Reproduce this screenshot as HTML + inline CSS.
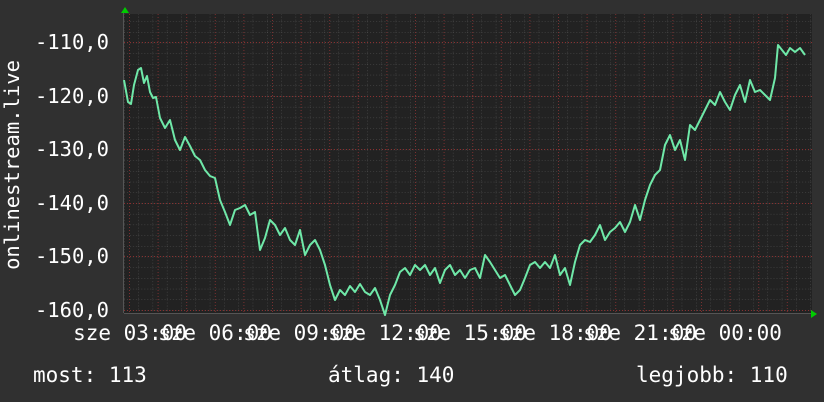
<!DOCTYPE html>
<html><head><meta charset="utf-8"><style>
body{margin:0;width:824px;height:402px;background:#303030;overflow:hidden;font-family:"DejaVu Sans Mono","Liberation Mono",monospace;color:#fff}
svg{position:absolute;left:0;top:0}
</style></head><body>
<svg width="824" height="402" xmlns="http://www.w3.org/2000/svg">
<defs>
<pattern id="minh" width="14.3" height="10.7" patternUnits="userSpaceOnUse" x="124" y="10.6">
<line x1="0" y1="0" x2="14.3" y2="0" stroke="#555" stroke-width="1" stroke-dasharray="1,2"/>
<line x1="0" y1="0" x2="0" y2="10.7" stroke="#555" stroke-width="1" stroke-dasharray="1,2"/>
</pattern>
</defs>
<rect x="124" y="14" width="688" height="299" fill="#222"/>
<rect x="124" y="14" width="688" height="299" fill="url(#minh)"/>
<g stroke="#8a3030" stroke-width="1" stroke-dasharray="1,2">
<line x1="124" y1="42.5" x2="812" y2="42.5"/>
<line x1="124" y1="96.5" x2="812" y2="96.5"/>
<line x1="124" y1="149.5" x2="812" y2="149.5"/>
<line x1="124" y1="203.5" x2="812" y2="203.5"/>
<line x1="124" y1="256.5" x2="812" y2="256.5"/>
<line x1="124" y1="310.5" x2="812" y2="310.5"/>
</g>
<g stroke="#7a3030" stroke-width="1" stroke-dasharray="1,2" id="v"></g>
<line x1="124" y1="313.5" x2="812" y2="313.5" stroke="#555"/>
<line x1="123.5" y1="12" x2="123.5" y2="313" stroke="#555"/>
<polygon points="121,13 125,7 129,13" fill="#0c0"/>
<polygon points="811,310 817,314 811,318" fill="#0c0"/>
<polyline fill="none" stroke="#6fe8a8" stroke-width="2" stroke-linejoin="round" points="124,80 128,102 131,104 134,85 138,70 141,68 144,83 147,76 150,92 153,98 156,97 160,118 165,128 170,120 175,140 180,150 185,137 190,146 195,156 200,160 205,170 210,176 215,178 220,200 225,212 230,225 235,210 240,208 245,205 250,215 255,212 260,250 265,238 270,220 275,225 280,235 285,228 290,240 295,245 300,230 305,255 310,245 315,240 320,250 325,265 330,285 335,300 340,290 345,295 350,286 355,292 360,284 365,292 370,295 375,288 380,300 385,315 390,295 395,285 400,272 405,268 410,275 415,265 420,270 425,265 430,275 435,268 440,283 445,270 450,265 455,275 460,270 465,278 470,270 475,268 480,278 485,255 490,262 495,270 500,278 505,275 510,285 515,295 520,290 525,278 530,265 535,262 540,268 545,262 550,268 555,255 560,275 565,268 570,285 575,262 580,245 585,240 590,242 595,235 600,225 605,240 610,232 615,228 620,222 625,232 630,222 635,205 640,220 645,200 650,185 655,175 660,170 665,145 670,135 675,150 680,140 685,160 690,125 695,130 700,120 705,110 710,100 715,105 720,92 725,102 730,110 735,95 740,85 745,102 750,80 755,92 760,90 765,95 770,100 775,78 778,45 782,50 786,55 790,48 795,52 800,48 805,55"/>
<g font-family="DejaVu Sans Mono, Liberation Mono, monospace" font-size="20.5" fill="#fff" text-anchor="end">
<text x="109" y="49">-110,0</text>
<text x="109" y="103">-120,0</text>
<text x="109" y="156">-130,0</text>
<text x="109" y="210">-140,0</text>
<text x="109" y="263">-150,0</text>
<text x="109" y="317">-160,0</text>
</g>
<g font-family="DejaVu Sans Mono, Liberation Mono, monospace" font-size="21" fill="#fff" text-anchor="middle">
<text x="130" y="340">sze 03:00</text>
<text x="215" y="340">sze 06:00</text>
<text x="300" y="340">sze 09:00</text>
<text x="385" y="340">sze 12:00</text>
<text x="470" y="340">sze 15:00</text>
<text x="555" y="340">sze 18:00</text>
<text x="640" y="340">sze 21:00</text>
<text x="725" y="340">sze 00:00</text>
</g>
<text transform="translate(19,165) rotate(-90)" text-anchor="middle" font-family="DejaVu Sans Mono, Liberation Mono, monospace" font-size="20.5" fill="#fff">onlinestream.live</text>
<g font-family="DejaVu Sans Mono, Liberation Mono, monospace" font-size="21" fill="#fff">
<text x="33" y="382">most: 113</text>
<text x="328" y="382">átlag: 140</text>
<text x="636" y="382">legjobb: 110</text>
</g>
</svg>
<script>
var g=document.getElementById('v'),ns='http://www.w3.org/2000/svg';
for(var x=129.5;x<812;x+=28.6){var l=document.createElementNS(ns,'line');l.setAttribute('x1',x);l.setAttribute('x2',x);l.setAttribute('y1',14);l.setAttribute('y2',313);g.appendChild(l);}
</script>
</body></html>
